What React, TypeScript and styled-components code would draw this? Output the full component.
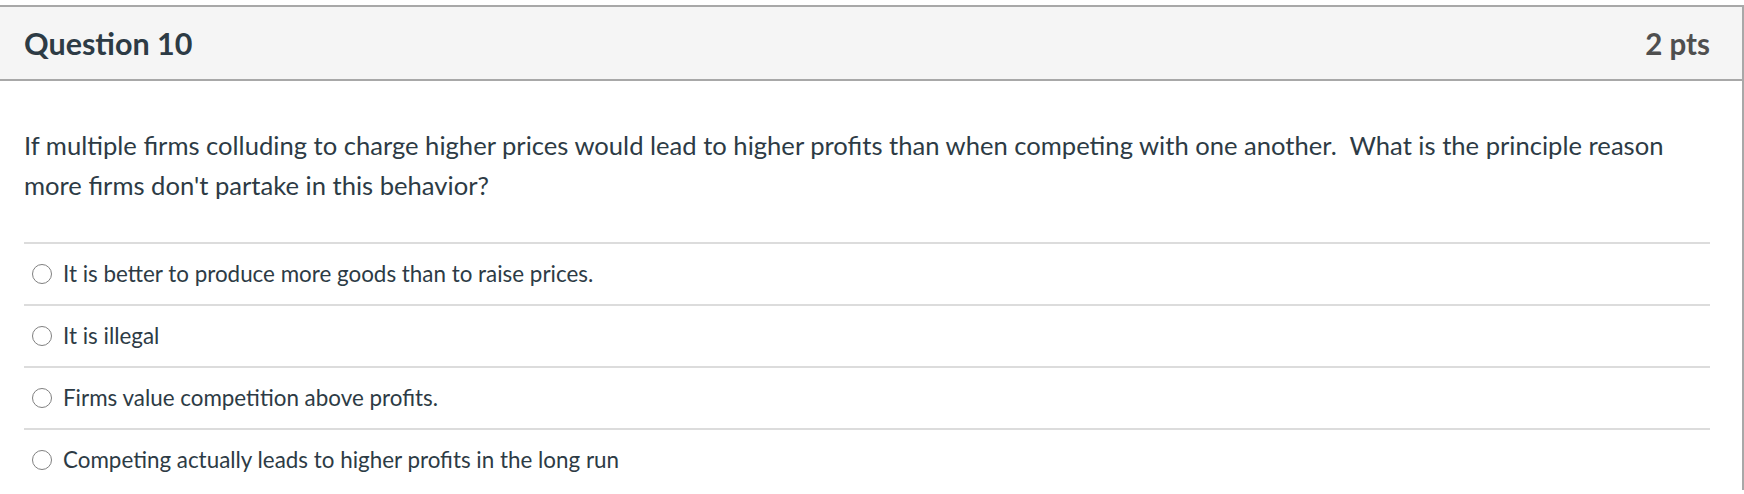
import styled, { createGlobalStyle } from 'styled-components'

const GlobalStyle = createGlobalStyle`
  html, body {
    margin: 0;
    padding: 0;
    background: #ffffff;
    overflow: hidden;
  }
  body {
    font-family: Lato, "Noto Sans", "Liberation Sans", sans-serif;
    color: #2d3b45;
  }
`

const Card = styled.div`
  box-sizing: border-box;
  margin: 5px 0 0 -10px;
  width: calc(100% + 10px);
  border: 2px solid #a8a8a8;
  border-bottom: none;
  background: #ffffff;
`

const Header = styled.div`
  display: flex;
  justify-content: space-between;
  align-items: center;
  height: 72px;
  padding: 0 32px;
  background: #f5f5f5;
  border-bottom: 2px solid #a8a8a8;
`

const Title = styled.h2`
  margin: 0;
  font-size: 30.5px;
  font-weight: 700;
  color: #2d3b45;
`

const Points = styled.div`
  font-size: 29.5px;
  font-weight: 700;
  color: #4f4f4f;
`

const Body = styled.div`
  padding: 44px 32px 0;
`

const QuestionText = styled.p`
  margin: 0 0 37px;
  font-size: 25.6px;
  line-height: 40px;
`

const Answers = styled.div`
  display: flex;
  flex-direction: column;
`

const Answer = styled.label`
  display: flex;
  align-items: center;
  gap: 11px;
  box-sizing: border-box;
  height: 62px;
  padding: 0 0 2px 8px;
  border-top: 2px solid #dcdcdc;
  font-size: 22.4px;
  color: #2d3b45;
  cursor: pointer;
`

const Radio = styled.span`
  box-sizing: border-box;
  flex: none;
  width: 20px;
  height: 20px;
  margin-top: 2px;
  border-radius: 50%;
  border: 1.5px solid #808080;
  background: #ffffff;
`

const answers = [
  'It is better to produce more goods than to raise prices.',
  'It is illegal',
  'Firms value competition above profits.',
  'Competing actually leads to higher profits in the long run',
]

export default function App() {
  return (
    <>
      <GlobalStyle />
      <Card>
        <Header>
          <Title>Question 10</Title>
          <Points>2 pts</Points>
        </Header>
        <Body>
          <QuestionText>
            If multiple firms colluding to charge higher prices would lead to higher profits than
            when competing with one another.&nbsp; What is the principle reason more firms don't
            partake in this behavior?
          </QuestionText>
          <Answers>
            {answers.map((a) => (
              <Answer key={a}>
                <Radio />
                {a}
              </Answer>
            ))}
          </Answers>
        </Body>
      </Card>
    </>
  )
}
